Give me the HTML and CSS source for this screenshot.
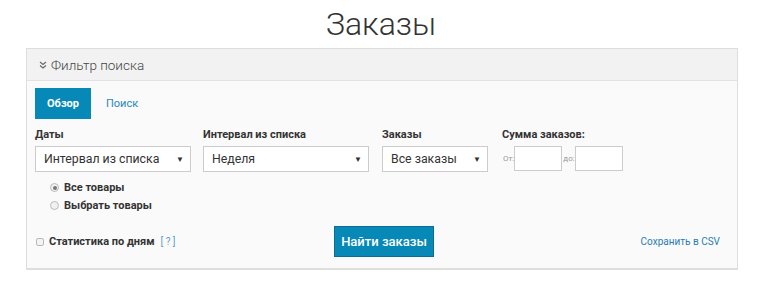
FILE: index.html
```html
<!DOCTYPE html>
<html lang="ru">
<head>
<meta charset="utf-8">
<link rel="stylesheet" href="styles.css">
</head>
<body>
<h1 class="title">Заказы</h1>
<div class="panel">
  <div class="panel-head">
    <svg class="chev" width="8" height="8" viewBox="0 0 8 8"><polyline points="1,1 4,3.5 7,1" fill="none" stroke="#666" stroke-width="1.1"/><polyline points="1,4.5 4,7 7,4.5" fill="none" stroke="#666" stroke-width="1.1"/></svg>
    <span>Фильтр поиска</span>
  </div>
  <div class="panel-body">
    <div class="tabs">
      <span class="tab active">Обзор</span>
      <span class="tab">Поиск</span>
    </div>
    <div class="fields">
      <div class="field f1">
        <div class="label">Даты</div>
        <div class="select"><span>Интервал из списка</span><span class="arrow">▼</span></div>
      </div>
      <div class="field f2">
        <div class="label">Интервал из списка</div>
        <div class="select"><span>Неделя</span><span class="arrow">▼</span></div>
      </div>
      <div class="field f3">
        <div class="label">Заказы</div>
        <div class="select"><span>Все заказы</span><span class="arrow">▼</span></div>
      </div>
      <div class="field f4">
        <div class="label">Сумма заказов:</div>
        <div class="range">
          <span class="small">От:</span><span class="input"></span><span class="small">до:</span><span class="input"></span>
        </div>
      </div>
    </div>
    <div class="radios">
      <label class="radio"><span class="dot checked"></span>Все товары</label>
      <label class="radio"><span class="dot"></span>Выбрать товары</label>
    </div>
    <div class="bottom">
      <div class="stat"><span class="box"></span><span class="stat-text">Статистика по дням</span><span class="help">[ ? ]</span></div>
      <div class="btn">Найти заказы</div>
      <div class="csv">Сохранить в CSV</div>
    </div>
  </div>
</div>
</body>
</html>
```

FILE: styles.css
```css
html, body {
  margin: 0;
  padding: 0;
  background: #fff;
  font-family: Roboto, "Noto Sans", sans-serif;
  color: #333;
}
.title {
  margin: 5px 0 0;
  font-size: 32px;
  line-height: 38px;
  font-weight: 300;
  text-align: center;
  color: #333;
}
.panel {
  margin: 5px 0 0 26px;
  width: 710px;
  border: 1px solid #dedede;
  border-bottom-width: 2px;
}
.panel-head {
  height: 31px;
  background: #f2f2f2;
  border-bottom: 1px solid #e2e2e2;
  display: flex;
  align-items: center;
  padding-left: 12px;
  font-size: 13.5px;
  font-weight: 300;
  color: #444;
}
.chev { margin-right: 4px; margin-top: 1px; }
.panel-body {
  background: #fafafa;
  padding: 7px 17px 11px 8px;
}
.tabs { display: flex; align-items: center; height: 31px; }
.tab {
  font-size: 11px;
  color: #2a87b8;
  padding: 0 15px 0 15px;
}
.tab.active {
  background: #0689b6;
  color: #fff;
  font-weight: 700;
  width: 56px;
  box-sizing: border-box;
  padding: 0;
  height: 31px;
  line-height: 31px;
  text-align: center;
}
.fields { display: flex; margin-top: 9px; }
.field { display: flex; flex-direction: column; }
.f1 { width: 168px; }
.f2 { width: 179px; }
.f3 { width: 120px; }
.label {
  font-size: 11px;
  font-weight: 700;
  line-height: 13px;
  margin-bottom: 5px;
}
.select {
  height: 26px;
  box-sizing: border-box;
  border: 1px solid #ccc;
  background: #fff;
  display: flex;
  align-items: center;
  justify-content: space-between;
  padding: 0 6px 0 8px;
  font-size: 12.3px;
  color: #333;
}
.f1 .select { width: 156px; }
.f2 .select { width: 166px; }
.f3 .select { width: 106px; }
.arrow { font-size: 8px; color: #333; }
.range { display: flex; align-items: center; }
.small { font-size: 8px; color: #999; margin-left: 1px; }
.input {
  width: 48px;
  height: 25px;
  box-sizing: border-box;
  border: 1px solid #ccc;
  background: #fff;
}
.radios {
  display: flex;
  flex-direction: column;
  gap: 5px;
  margin: 9px 0 0 15px;
}
.radio {
  display: flex;
  align-items: center;
  font-size: 11px;
  font-weight: 700;
  line-height: 13px;
}
.dot {
  width: 9px;
  height: 9px;
  box-sizing: border-box;
  border-radius: 50%;
  border: 1px solid #bbb;
  background: #f1f1f1;
  margin-right: 5px;
  position: relative;
}
.dot.checked::after {
  content: "";
  position: absolute;
  left: 1.5px;
  top: 1.5px;
  width: 4px;
  height: 4px;
  border-radius: 50%;
  background: #777;
}
.bottom {
  display: grid;
  grid-template-columns: 299px 100px 1fr;
  align-items: center;
  margin-top: 14px;
}
.stat { display: flex; align-items: center; font-size: 11px; }
.box {
  width: 8px;
  height: 8px;
  box-sizing: border-box;
  border: 1px solid #bbb;
  border-radius: 2px;
  background: #f3f3f3;
  margin: 0 5px 0 1px;
}
.stat-text { font-weight: 700; }
.help { color: #5a9fcb; margin-left: 6px; font-size: 10px; }
.btn {
  height: 31px;
  box-sizing: border-box;
  background: #0689b6;
  border: 1px solid #0a6e92;
  color: #fff;
  font-size: 13px;
  font-weight: 500;
  display: flex;
  align-items: center;
  justify-content: center;
}
.csv {
  text-align: right;
  font-size: 10px;
  color: #2a7db0;
}
```
